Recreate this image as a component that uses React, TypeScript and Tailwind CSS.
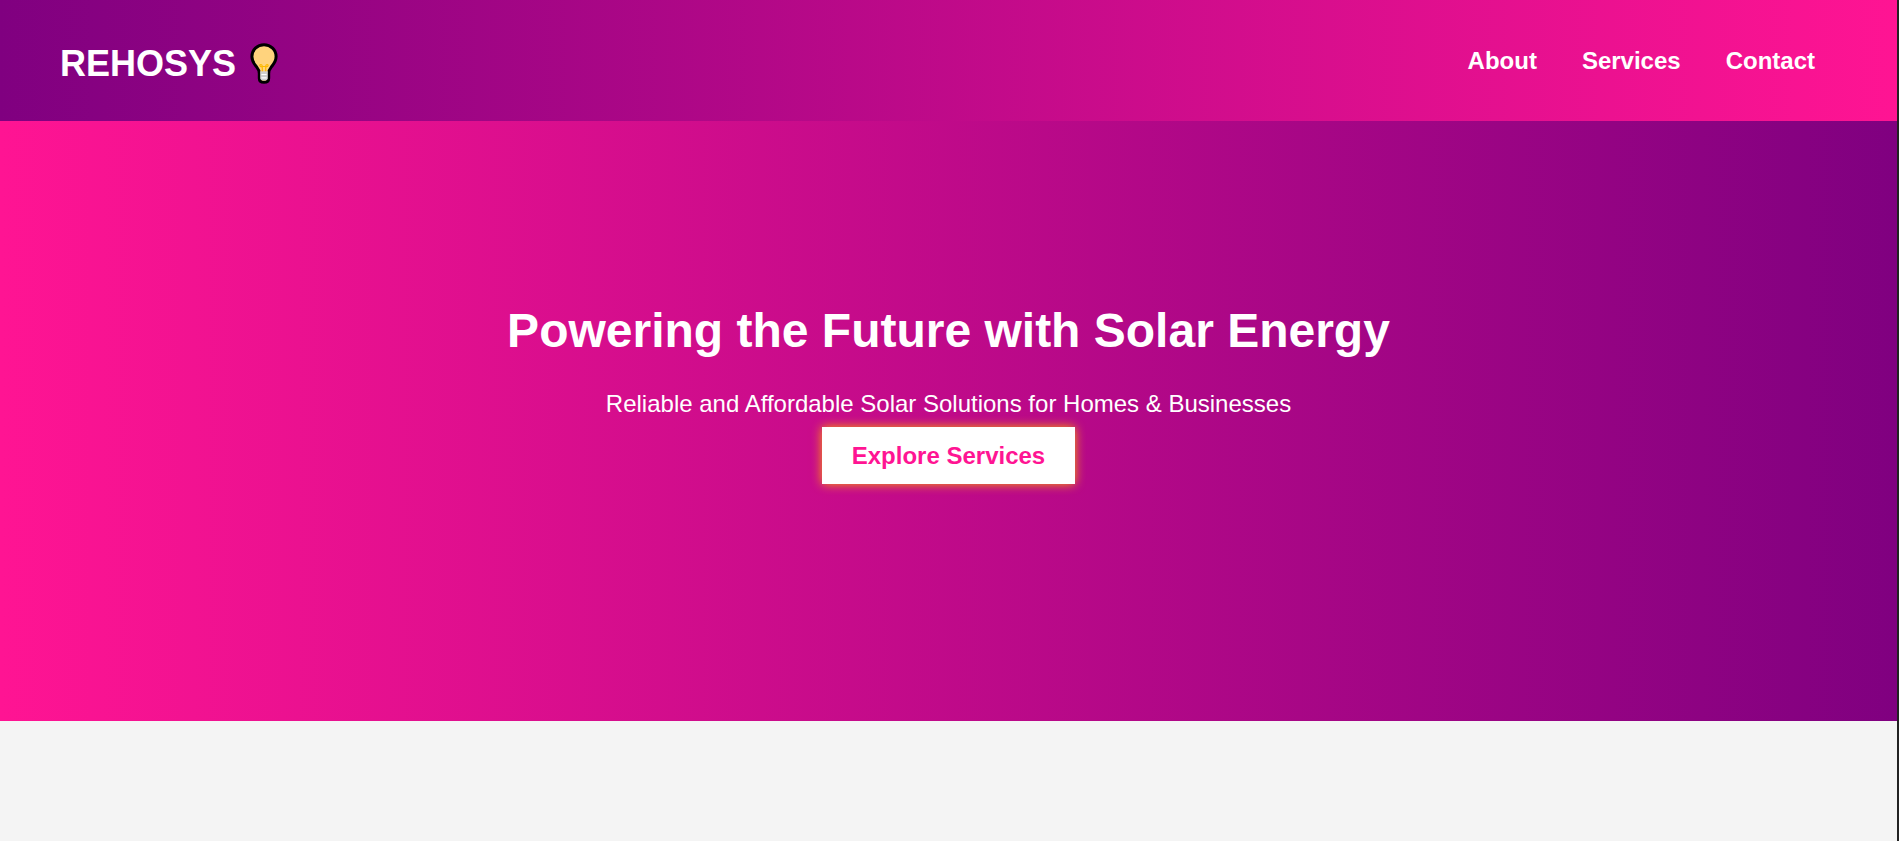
const links = ['About', 'Services', 'Contact'];

function Bulb() {
  return (
    <svg viewBox="0 0 28 41" className="h-[41px] w-7" aria-hidden="true">
      <path
        d="M14 1.700C7.200 1.700 1.900 6.900 1.900 13.600c0 5 2.500 7.600 4.700 10.300 1.900 2.300 2.700 4 2.700 6.600v4.700c0 2.700 1.800 4.100 4.700 4.100s4.700-1.400 4.700-4.100v-4.700c0-2.600.8-4.300 2.700-6.600 2.200-2.700 4.700-5.300 4.700-10.300C26.100 6.900 20.800 1.700 14 1.700Z"
        fill="#ffd37d"
        stroke="#000"
        strokeWidth="3"
      />
      <path d="M10.200 28.300h7.600v7.200c0 1.300-1.500 2-3.800 2s-3.800-.7-3.800-2Z" fill="#d0d0d0" />
      <path d="M11.400 31.500h5.200M11.400 34.800h5.200" stroke="#fff" strokeWidth="1.200" />
      <path d="M12.300 28.300v-5.500M15.700 28.300v-5.500M12.300 23.500h3.400M12.300 23.800c-3 .2-3-2.500-1.300-2.300 1 .1 1.300 1 1.300 2.300ZM15.700 23.800c3 .2 3-2.500 1.300-2.300-1 .1-1.300 1-1.300 2.300Z" fill="none" stroke="#fdb900" strokeWidth="1.200" />
    </svg>
  );
}

export default function App() {
  return (
    <div className="min-h-screen border-r-2 border-[#222] bg-[#f4f4f4] font-['Liberation_Sans',Arial,sans-serif] text-white">
      <header className="flex items-start justify-between bg-[linear-gradient(90deg,#800080,#ff1493)] px-[60px] pt-[43px] pb-[37px]">
        <a href="#home" className="flex items-center gap-[14px] text-4xl leading-[41px] font-bold">
          REHOSYS
          <Bulb />
        </a>
        <nav className="flex gap-[45px] pr-[22px] text-2xl leading-9 font-bold">
          {links.map((l) => (
            <a key={l} href={`#${l.toLowerCase()}`}>
              {l}
            </a>
          ))}
        </nav>
      </header>
      <main>
        <section className="flex min-h-[600px] flex-col items-center justify-center bg-[linear-gradient(90deg,#ff1493,#800080)] pb-14 text-center">
          <h1 className="text-5xl leading-[55px] font-bold">Powering the Future with Solar Energy</h1>
          <p className="mt-8 text-2xl leading-7">Reliable and Affordable Solar Solutions for Homes &amp; Businesses</p>
          <a
            href="#services"
            className="mt-[9px] bg-white px-[30px] py-[15px] text-2xl leading-[27px] font-bold text-[#ff1493] shadow-[0_0_10px_#ffa500]"
          >
            Explore Services
          </a>
        </section>
      </main>
    </div>
  );
}
